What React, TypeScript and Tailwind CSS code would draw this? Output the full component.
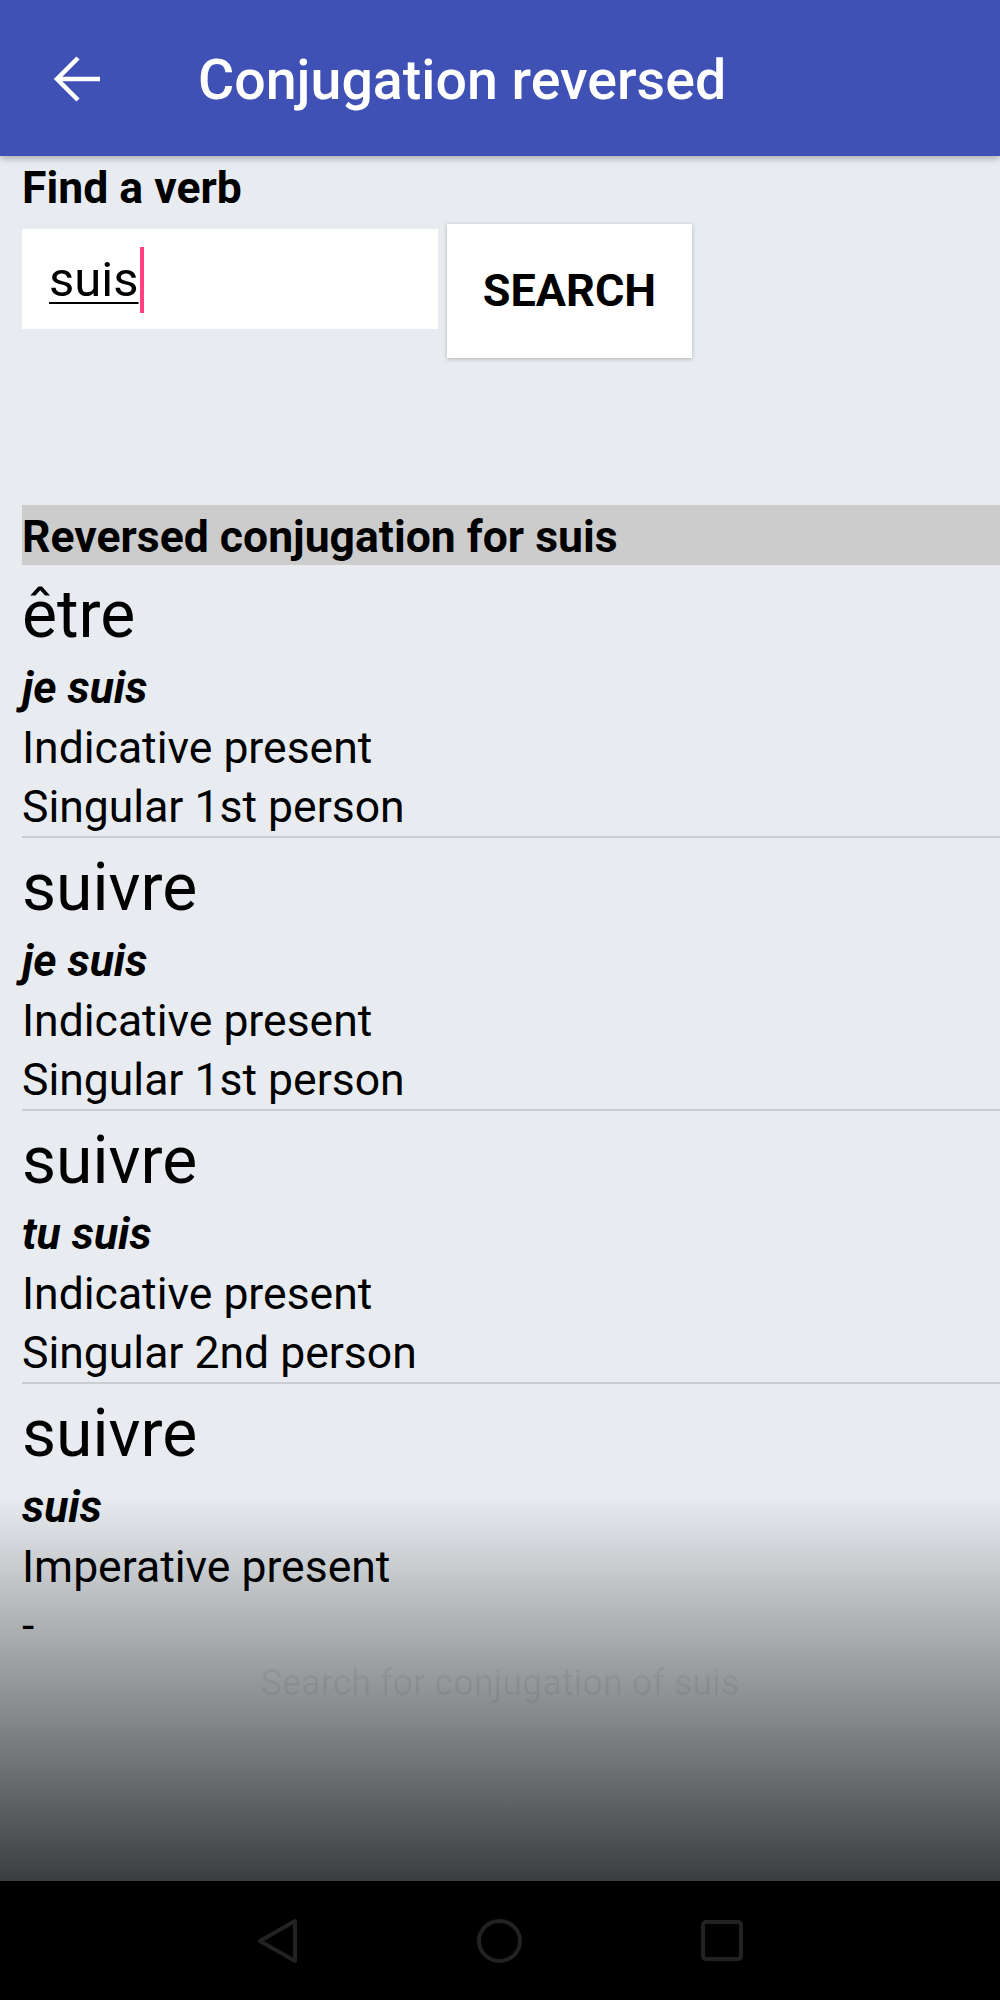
import React from "react";

type Match = {
  verb: string;
  form: string;
  tense: string;
  person: string;
};

const matches: Match[] = [
  { verb: "être", form: "je suis", tense: "Indicative present", person: "Singular 1st person" },
  { verb: "suivre", form: "je suis", tense: "Indicative present", person: "Singular 1st person" },
  { verb: "suivre", form: "tu suis", tense: "Indicative present", person: "Singular 2nd person" },
  { verb: "suivre", form: "suis", tense: "Imperative present", person: "-" },
];

function MatchRow({ match, last }: { match: Match; last: boolean }) {
  return (
    <div>
      <p className="pt-[6px] text-[66px] leading-[87px]">{match.verb}</p>
      <p className="text-[44.5px] font-bold italic leading-[60px]">{match.form}</p>
      <p className="text-[44.5px] leading-[60px]">{match.tense}</p>
      <p className="text-[44.5px] leading-[58px]">{match.person}</p>
      {!last && <div className="h-[2px] bg-[#c9cdd2]" />}
    </div>
  );
}

export default function App() {
  return (
    <div className="relative flex h-[2000px] w-[1000px] flex-col overflow-hidden bg-[#e8ecf0] font-[Roboto] text-black">
      <header className="relative z-10 flex h-[156px] shrink-0 items-center bg-[#3f51b5] shadow-[0_3px_6px_rgba(0,0,0,0.25)]">
        <svg className="ml-[52px] h-[52px] w-[52px]" viewBox="0 0 52 52" fill="none">
          <path
            d="M5 27H48M26 6L5 27L26 48"
            stroke="white"
            strokeWidth="4.5"
            strokeLinejoin="miter"
          />
        </svg>
        <h1 className="ml-[94px] mt-[6px] text-[55.5px] font-medium leading-[64px] text-white">
          Conjugation reversed
        </h1>
      </header>

      <main className="flex-1 pl-[22px]">
        <p className="mt-[6px] text-[44.5px] font-bold leading-[52px]">Find a verb</p>
        <div className="mt-[10px] flex items-start gap-[9px]">
          <div className="mt-[5px] flex h-[100px] w-[416px] items-start bg-white pl-[27px]">
            <span className="pt-[23px] text-[49px] leading-[56px] underline decoration-2 underline-offset-[6px]">
              suis
            </span>
            <div className="ml-[1px] mt-[18px] h-[66px] w-[4px] bg-[#ff4081]" />
          </div>
          <button
            type="button"
            className="flex h-[134px] w-[245px] items-center justify-center bg-white text-[45px] font-bold shadow-[0_1px_4px_rgba(0,0,0,0.25)]"
          >
            SEARCH
          </button>
        </div>

        <div className="mt-[147px] h-[60px] bg-[#cccccc] pt-[4px] text-[44.5px] font-bold leading-[56px]">
          Reversed conjugation for suis
        </div>

        {matches.map((m, i) => (
          <MatchRow key={i} match={m} last={i === matches.length - 1} />
        ))}
      </main>

      <nav className="flex h-[119px] shrink-0 items-center justify-center gap-[179px] bg-black">
        <svg className="h-[46px] w-[41px]" viewBox="0 0 41 46" fill="none">
          <path d="M3 23L38 3V43Z" stroke="#222222" strokeWidth="4" strokeLinejoin="round" />
        </svg>
        <svg className="h-[44px] w-[45px]" viewBox="0 0 45 44" fill="none">
          <ellipse cx="22.5" cy="22" rx="20.5" ry="20" stroke="#222222" strokeWidth="4" />
        </svg>
        <svg className="h-[41px] w-[42px]" viewBox="0 0 42 41" fill="none">
          <rect x="2" y="2" width="38" height="37" rx="3" stroke="#222222" strokeWidth="4" />
        </svg>
      </nav>

      <div className="pointer-events-none absolute left-0 right-0 top-[1495px] h-[386px] bg-linear-to-b/srgb from-black/0 to-black/[0.74]">
        <p className="absolute left-0 right-0 top-[164px] text-center text-[36px] leading-[48px] text-black/[0.06]">
          Search for conjugation of suis
        </p>
      </div>
    </div>
  );
}
